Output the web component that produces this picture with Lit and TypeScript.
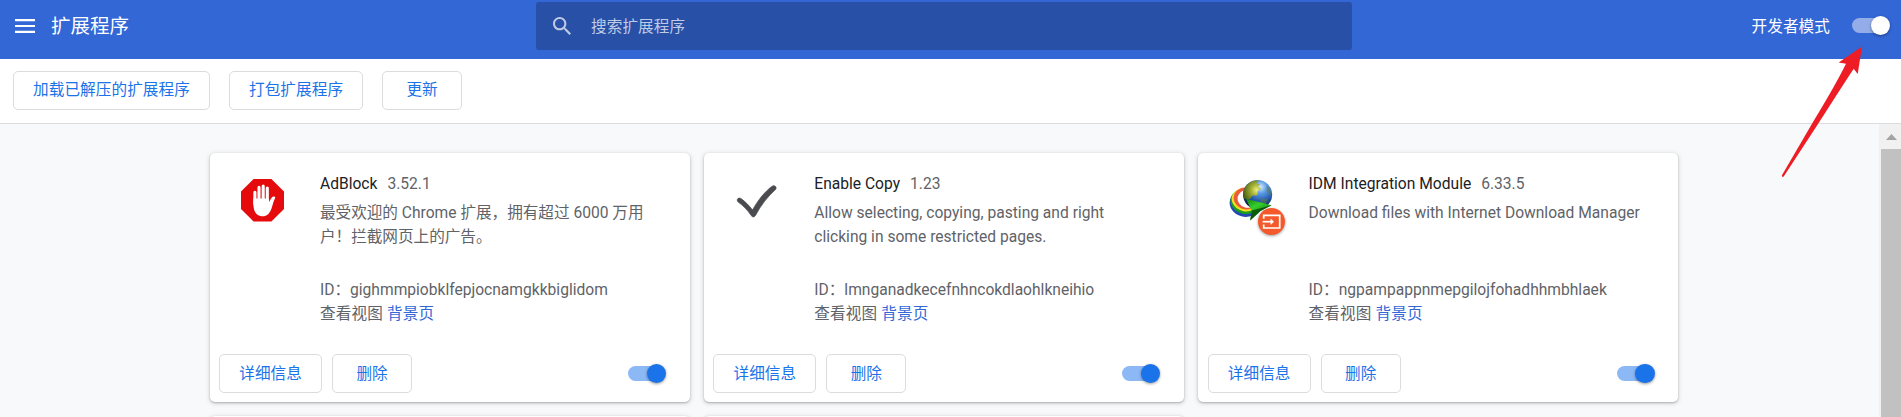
import { LitElement, html, css, svg, nothing } from "lit";
import { customElement, property } from "lit/decorators.js";

interface Extension {
  icon: "adblock" | "check" | "idm";
  name: string;
  version: string;
  description: string;
  id: string;
}

const EXTENSIONS: Extension[] = [
  {
    icon: "adblock",
    name: "AdBlock",
    version: "3.52.1",
    description: "最受欢迎的 Chrome 扩展，拥有超过 6000 万用户！拦截网页上的广告。",
    id: "gighmmpiobklfepjocnamgkkbiglidom",
  },
  {
    icon: "check",
    name: "Enable Copy",
    version: "1.23",
    description: "Allow selecting, copying, pasting and right clicking in some restricted pages.",
    id: "lmnganadkecefnhncokdlaohlkneihio",
  },
  {
    icon: "idm",
    name: "IDM Integration Module",
    version: "6.33.5",
    description: "Download files with Internet Download Manager",
    id: "ngpampappnmepgilojfohadhhmbhlaek",
  },
];

const ICONS = {
  adblock: svg`
    <path d="M12.6 0H30.4L43 12.6V30L30.4 42.6H12.6L0 30V12.6Z" fill="#e50b0c"/>
    <g stroke="#fff" stroke-width="3.1" stroke-linecap="round" fill="none">
      <path d="M13.9 13.2V25M18 8.4V24M22.2 7V24M26.3 9V24"/>
    </g>
    <path d="M12.3 19.5H27.9V23.6C28.8 21.5 29.8 19.6 31 18.2C32 17.1 34.4 17.1 34.2 18.7C33.6 20.4 32.6 22.3 31.8 25.2C30.6 29.6 29.6 32.6 27.4 34.9C25.6 36.8 23 37.4 20.6 37.2C16.8 36.9 14.2 34.3 13.2 31C12.4 28.5 12.3 24 12.3 19.5Z" fill="#fff"/>`,
  check: svg`
    <path d="M2.3 20.6C2.9 18.8 5 18.7 6.6 20C10.6 23 14.2 26.6 17.5 31C22.3 22.2 29.2 13 37.2 7.2C39.8 5.7 42.3 8.3 40.5 10.6C32.6 17.6 26.2 26 20.5 36.4C19.3 38.4 17.4 38.3 16.2 36.6C12.6 31.2 8.2 26.6 3.2 23.1Q2 22 2.3 20.6Z" fill="#4a4b4e" stroke="#4a4b4e" stroke-width=".7"/>`,
  idm: svg`
    <defs>
      <radialGradient id="globe" cx=".6" cy=".24" r=".78">
        <stop offset="0" stop-color="#d4edfb"/><stop offset=".28" stop-color="#5c9be5"/>
        <stop offset=".62" stop-color="#2459ae"/><stop offset="1" stop-color="#091839"/>
      </radialGradient>
      <radialGradient id="land" cx=".75" cy=".5" r=".75">
        <stop offset="0" stop-color="#f0ee7e"/><stop offset=".4" stop-color="#a6b236"/><stop offset="1" stop-color="#4d6314"/>
      </radialGradient>
      <linearGradient id="tip" x1="0" y1="0" x2=".7" y2="1">
        <stop offset="0" stop-color="#128212"/><stop offset=".4" stop-color="#35cf2b"/><stop offset="1" stop-color="#0f6a0f"/>
      </linearGradient>
    </defs>
    <g transform="rotate(14 16 23)">
      <ellipse cx="16" cy="24.8" rx="15" ry="13" fill="#2447b4"/>
      <ellipse cx="15.8" cy="22.6" rx="14.6" ry="12.2" fill="#18a01c"/>
      <ellipse cx="15.8" cy="20.8" rx="13.8" ry="11.5" fill="#f3dc25"/>
      <ellipse cx="16" cy="19.4" rx="12.2" ry="10.8" fill="#ec5a3e"/>
      <ellipse cx="17.4" cy="19.4" rx="9.8" ry="8.8" fill="#fff"/>
    </g>
    <circle cx="28.6" cy="15.6" r="14.6" fill="url(#globe)"/>
    <path d="M15.6 9.2C18.4 3.7 24.6 .5 30.1 1.8L27.1 4.6L31.1 5.3L28.8 7.6L32.2 9.4L28.9 12.1L28.4 16.3L23.2 16.8L20.6 20.5L15 19.4Q13.1 13.6 15.6 9.2Z" fill="url(#land)"/>
    <path d="M37.6 6.6L41.2 10.1L42.1 16.6L37.6 12.8Z M31.6 19.6L39.1 20.1L36.6 25.6L31.6 24.6Z" fill="#647f31" opacity=".5"/>
    <path d="M17 19.8L42.6 26.2L31.5 32L21.2 41.6L22.6 31.4Z" fill="url(#tip)"/>
    <path d="M22.6 31.4L42.6 26.2L31.5 32L21.2 41.6Z" fill="#063f07" opacity=".75"/>`,
};

@customElement("ext-toggle")
export class ExtToggle extends LitElement {
  @property({ type: Boolean, reflect: true }) light = false;

  static styles = css`
    :host {
      display: block;
      width: 38px;
      height: 20px;
      flex: none;
      --bar: #8cb8f6;
      --knob: #1a73e8;
    }
    :host([light]) {
      --bar: #94ade8;
      --knob: #fff;
    }
    .track {
      display: flex;
      align-items: center;
      height: 20px;
    }
    .bar {
      display: flex;
      align-items: center;
      justify-content: flex-end;
      width: 34px;
      height: 15px;
      border-radius: 8px;
      background: var(--bar);
    }
    .knob {
      flex: none;
      width: 19.4px;
      height: 19.4px;
      margin-right: -4px;
      border-radius: 50%;
      background: var(--knob);
      box-shadow: 0 1px 3px rgba(0, 0, 0, 0.4);
    }
  `;

  render() {
    return html`<div class="track"><div class="bar"><div class="knob"></div></div></div>`;
  }
}

@customElement("ext-card")
export class ExtCard extends LitElement {
  @property({ attribute: false }) item!: Extension;

  static styles = css`
    :host {
      display: flex;
      flex-direction: column;
      box-sizing: border-box;
      width: 480px;
      height: 249.4px;
      background: #fff;
      border-radius: 5px;
      box-shadow: 0 1px 2px rgba(60, 64, 67, 0.3), 0 1px 4px 1px rgba(60, 64, 67, 0.15);
      color: #5f6368;
      font-size: 15.6px;
      line-height: 24px;
    }
    .main {
      display: flex;
      height: 191px;
      padding: 19px 24px 0 31px;
      box-sizing: border-box;
    }
    .icon {
      position: relative;
      width: 79.3px;
      flex: none;
      padding-top: 7px;
      box-sizing: border-box;
    }
    .art {
      display: block;
      width: 43px;
      height: 43px;
      overflow: visible;
    }
    .badge {
      position: absolute;
      left: 28.5px;
      top: 35.5px;
      width: 27px;
      height: 27px;
      border-radius: 50%;
      background: #f4592b;
      box-shadow: 0 1px 3px rgba(0, 0, 0, 0.4);
    }
    .badge svg {
      display: block;
      width: 27px;
      height: 27px;
    }
    .info {
      width: 336px;
      white-space: nowrap;
    }
    .heading {
      display: flex;
      gap: 10px;
    }
    .name {
      color: #202124;
    }
    .description {
      height: 82px;
      padding-top: 5px;
      box-sizing: border-box;
      white-space: normal;
    }
    .views {
      letter-spacing: 0.15px;
    }
    .link {
      color: #3367d6;
    }
    .actions {
      display: flex;
      align-items: center;
      gap: 10px;
      padding: 10px 23.6px 0 9.4px;
    }
    .button {
      box-sizing: border-box;
      height: 39px;
      line-height: 38px;
      border: 1px solid #dadce0;
      border-radius: 5px;
      width: 80px;
      text-align: center;
      letter-spacing: 0.1px;
      color: #1a73e8;
    }
    .wide {
      width: 103px;
    }
    .spacer {
      flex: 1;
    }
  `;

  render() {
    const { icon, name, version, description, id } = this.item;
    return html`
      <div class="main">
        <div class="icon">
          <svg class="art" viewBox="0 0 43 43">${ICONS[icon]}</svg>
          ${icon === "idm"
            ? html`<div class="badge">
                <svg viewBox="0 0 27 27" fill="none" stroke="#fff" stroke-width="1.7">
                  <path d="M5.7 10.8V7.4H21.7V20H5.7V16.6" />
                  <path d="M4.6 13.7H14" />
                  <path d="M12.6 10.4L16 13.7L12.6 17Z" fill="#fff" stroke="none" />
                </svg>
              </div>`
            : nothing}
        </div>
        <div class="info">
          <div class="heading"><span class="name">${name}</span><span>${version}</span></div>
          <div class="description">${description}</div>
          <div>ID：${id}</div>
          <div class="views">查看视图 <span class="link">背景页</span></div>
        </div>
      </div>
      <div class="actions">
        <div class="button wide">详细信息</div>
        <div class="button">删除</div>
        <div class="spacer"></div>
        <ext-toggle></ext-toggle>
      </div>
    `;
  }
}

@customElement("app-root")
export class AppRoot extends LitElement {
  static styles = css`
    :host {
      display: flex;
      flex-direction: column;
      position: relative;
      width: 1901px;
      height: 417px;
      overflow: hidden;
      background: #f8f9fa;
      font-family: Roboto, "Noto Sans CJK SC", sans-serif;
      font-size: 15.6px;
    }
    .header {
      display: flex;
      flex: none;
      height: 59px;
      box-sizing: border-box;
      padding: 2px 11px 0 15px;
      background: #3367d6;
      color: #fff;
    }
    .brand,
    .dev {
      display: flex;
      align-items: center;
      height: 47px;
    }
    .brand {
      width: 521px;
      gap: 16px;
      font-size: 19.5px;
    }
    .brand span {
      padding-bottom: 2px;
    }
    .menu {
      width: 20px;
      height: 14px;
      margin-top: 1px;
    }
    .search {
      display: flex;
      align-items: center;
      width: 816px;
      height: 48px;
      box-sizing: border-box;
      padding: 0 0 1px 17px;
      gap: 20px;
      border-radius: 3px;
      background: #2850a7;
      color: #bfcbe5;
    }
    .search svg {
      width: 18px;
      height: 18px;
    }
    .search span,
    .dev span {
      padding-bottom: 1px;
      letter-spacing: 0.1px;
    }
    .dev {
      flex: 1;
      justify-content: flex-end;
      gap: 22px;
    }
    .toolbar {
      display: flex;
      flex: none;
      gap: 19px;
      height: 65px;
      box-sizing: border-box;
      padding: 12px 13px 0;
      background: #fff;
      border-bottom: 1px solid #dadce0;
    }
    .button {
      box-sizing: border-box;
      height: 39px;
      line-height: 37px;
      padding: 0 19px;
      min-width: 80px;
      text-align: center;
      letter-spacing: 0.1px;
      border: 1px solid #dadce0;
      border-radius: 5px;
      color: #1a73e8;
      white-space: nowrap;
    }
    .body {
      display: flex;
      flex: 1;
      min-height: 0;
    }
    .content {
      flex: 1;
      overflow: hidden;
    }
    .grid {
      display: grid;
      grid-template-columns: repeat(3, 480px);
      gap: 14px 14.3px;
      padding: 29px 0 0 209.7px;
    }
    .next {
      height: 240px;
      background: #fff;
      border-radius: 5px;
      box-shadow: 0 1px 2px rgba(60, 64, 67, 0.3), 0 1px 4px 1px rgba(60, 64, 67, 0.15);
    }
    .scrollbar {
      display: flex;
      flex-direction: column;
      width: 22px;
      background: #f1f1f1;
    }
    .up {
      width: 11px;
      height: 6px;
      margin: 10px 0 9px 7px;
      flex: none;
    }
    .thumb {
      flex: 1;
      margin-left: 2px;
      background: #c1c1c1;
    }
    .pointer {
      position: absolute;
      left: 1775px;
      top: 40px;
      width: 95px;
      height: 145px;
    }
  `;

  render() {
    return html`
      <div class="header">
        <div class="brand">
          <svg class="menu" viewBox="0 0 20 14" fill="#fff">
            <path d="M0 0H20V2.2H0ZM0 5.9H20V8.1H0ZM0 11.8H20V14H0Z" />
          </svg>
          <span>扩展程序</span>
        </div>
        <div class="search">
          <svg viewBox="3 3 17.5 17.5" fill="#bfcbe5">
            <path
              d="M15.5 14h-.79l-.28-.27C15.41 12.59 16 11.11 16 9.5 16 5.91 13.09 3 9.5 3S3 5.91 3 9.5 5.91 16 9.5 16c1.61 0 3.09-.59 4.23-1.57l.27.28v.79l5 4.99L20.49 19l-4.99-5zm-6 0C7.01 14 5 11.99 5 9.5S7.01 5 9.5 5 14 7.01 14 9.5 11.99 14 9.5 14z"
            />
          </svg>
          <span>搜索扩展程序</span>
        </div>
        <div class="dev">
          <span>开发者模式</span>
          <ext-toggle light></ext-toggle>
        </div>
      </div>
      <div class="toolbar">
        <div class="button">加载已解压的扩展程序</div>
        <div class="button">打包扩展程序</div>
        <div class="button">更新</div>
      </div>
      <div class="body">
        <div class="content">
          <div class="grid">
            ${EXTENSIONS.map((item) => html`<ext-card .item=${item}></ext-card>`)}
            <div class="next"></div>
            <div class="next"></div>
          </div>
        </div>
        <div class="scrollbar">
          <svg class="up" viewBox="0 0 11 6"><path d="M0 6L5.5 0L11 6Z" fill="#a3a3a3" /></svg>
          <div class="thumb"></div>
        </div>
      </div>
      <svg class="pointer" viewBox="1775 40 95 145">
        <path
          d="M1862 46.5L1838.7 62.5L1846 63.8Q1835 86 1813 122L1781.8 175.5Q1782 177.5 1783.7 176.6L1818 124Q1841 88 1853.7 68.7L1857.7 74Z"
          fill="#ee1c25"
        />
      </svg>
    `;
  }
}
